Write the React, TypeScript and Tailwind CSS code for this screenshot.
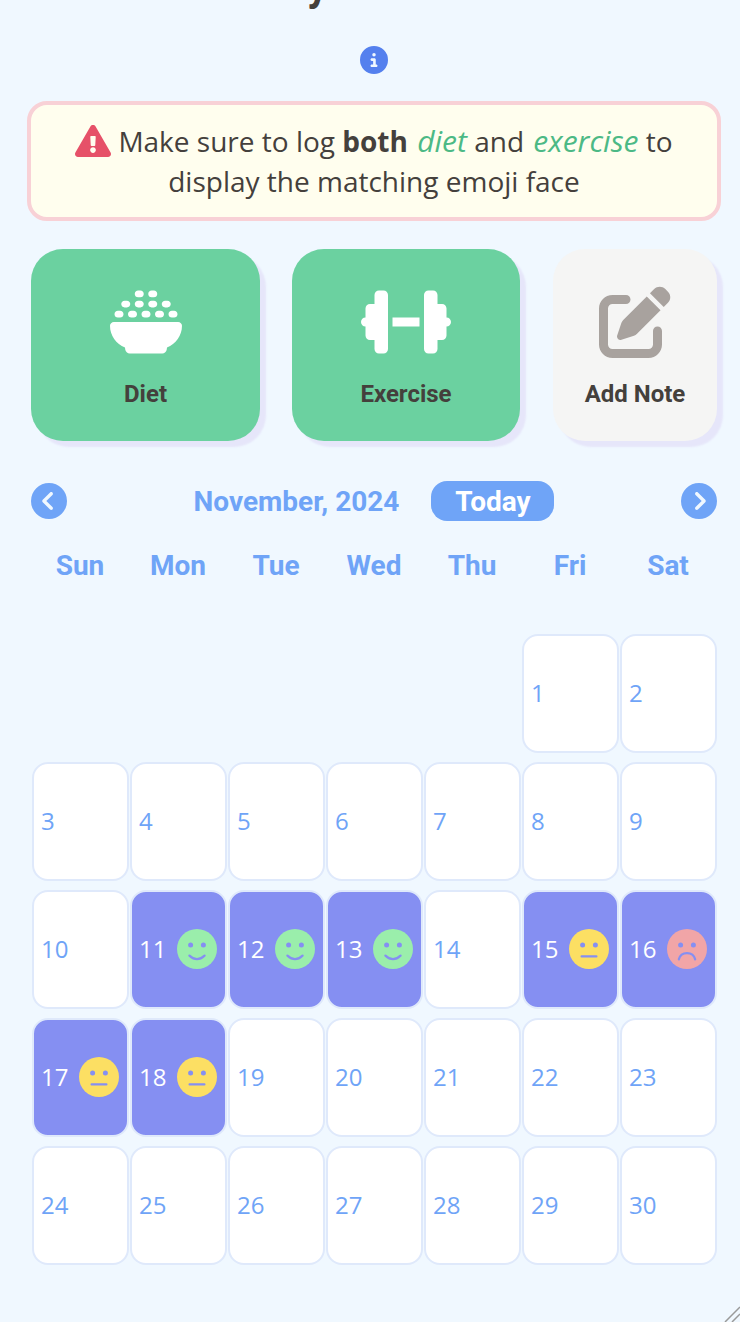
import React from "react";
import { FaExclamationTriangle } from "react-icons/fa";
import {
  FaBowlRice,
  FaCircleChevronLeft,
  FaCircleChevronRight,
  FaCircleInfo,
  FaDumbbell,
  FaPenToSquare,
} from "react-icons/fa6";

type Mood = "good" | "ok" | "bad";

const weekDays = ["Sun", "Mon", "Tue", "Wed", "Thu", "Fri", "Sat"];

const moods: Record<number, Mood> = {
  11: "good",
  12: "good",
  13: "good",
  15: "ok",
  16: "bad",
  17: "ok",
  18: "ok",
};

const days = Array.from({ length: 30 }, (_, i) => i + 1);

const moodFill: Record<Mood, string> = {
  good: "#9aeeab",
  ok: "#fcdf63",
  bad: "#f1a5a7",
};

const mouths: Record<Mood, string> = {
  good: "M12.4 26.6Q20 33.6 27.6 26.6",
  ok: "M12.6 27.4H27.4",
  bad: "M11.8 30.4C14 22 26 22 28.2 30.4",
};

// face drawn by hand, eyes and mouth take the cell colour
const MoodIcon = ({ mood }: { mood: Mood }) => (
  <svg className="h-10 w-10" viewBox="0 0 40 40">
    <circle cx="20" cy="20" r="20" fill={moodFill[mood]} />
    <circle cx="13.6" cy="16" r="2.5" fill="#858ff2" />
    <circle cx="26.4" cy="16" r="2.5" fill="#858ff2" />
    <path d={mouths[mood]} fill="none" stroke="#858ff2" strokeWidth="2.2" strokeLinecap="round" />
  </svg>
);

const DayCell = ({ day }: { day: number }) => {
  const mood = moods[day];
  return (
    <div
      className={`mx-[0.5px] mt-[0.5px] mb-[8.5px] flex h-[119px] items-center justify-between rounded-2xl border-2 border-[#dfe9fb] px-[7.5px] text-[24px] ${
        mood ? "bg-[#858ff2] text-white" : "bg-white text-[#6fa4f7]"
      }`}
    >
      <span>{day}</span>
      {mood && <MoodIcon mood={mood} />}
    </div>
  );
};

const ActionButton = ({
  label,
  icon,
  className,
}: {
  label: string;
  icon: React.ReactNode;
  className: string;
}) => (
  <div
    className={`flex h-[192px] flex-col items-center rounded-[32px] pt-[35px] shadow-[6px_6px_2px_0_#e6e6fa] ${className}`}
  >
    <div className="flex h-[76px] items-center">{icon}</div>
    <span className="mt-[19px] font-['Roboto',sans-serif] text-[24px] font-bold leading-[30px] text-[#44403c]">
      {label}
    </span>
  </div>
);

export default function App() {
  return (
    <div className="relative h-[1322px] w-[740px] overflow-hidden bg-[#f0f8ff] font-['Open_Sans',sans-serif]">
      <div className="ml-[31px] w-[686px]">
        <h1 className="mt-[-37px] h-[46px] text-center font-['Roboto',sans-serif] text-[42px] font-bold leading-[46px] text-[#44403c]">
          Daily Overview
        </h1>

        <div className="mt-[37px] flex justify-center">
          <FaCircleInfo className="text-[28px] text-[#5480ee]" />
        </div>

        <div className="mx-[-4px] mt-[27px] h-[120px] rounded-[20px] border-4 border-[#f8d1d6] bg-[#fffeee] px-2 pt-[16px] text-center text-[28px] leading-[40px] text-[#44403c]">
          <FaExclamationTriangle className="mr-[7px] inline-block align-[-7px] text-[36px] text-[#e65168]" />
          Make sure to log <b className="mr-[2px] font-bold">both</b>{" "}
          <i className="text-[30px] text-[#4cb985]">diet</i> and{" "}
          <i className="ml-[2px] text-[30px] text-[#4cb985]">exercise</i> to display the matching
          emoji face
        </div>

        <div className="mt-[28px] flex gap-8">
          <ActionButton
            label="Diet"
            className="w-[229px] bg-[#6bd1a0]"
            icon={<FaBowlRice className="text-[72px] text-white" />}
          />
          <ActionButton
            label="Exercise"
            className="w-[228px] bg-[#6bd1a0]"
            icon={<FaDumbbell className="text-[90px] text-white" />}
          />
          <ActionButton
            label="Add Note"
            className="ml-auto w-[164px] bg-[#f5f5f4]"
            icon={<FaPenToSquare className="text-[72px] text-[#a8a29e]" />}
          />
        </div>

        <div className="mt-[40px] flex h-10 items-center justify-between font-['Roboto',sans-serif] font-bold text-[#6fa4f7]">
          <FaCircleChevronLeft className="text-[36px]" />
          <div className="flex items-center gap-8">
            <span className="pt-[2px] text-[28px]">November, 2024</span>
            <span className="flex h-10 w-[123px] items-center justify-center rounded-2xl bg-[#6fa4f7] pt-[2px] text-[28px] text-white">
              Today
            </span>
          </div>
          <FaCircleChevronRight className="text-[36px]" />
        </div>

        <div className="mt-[25px] grid grid-cols-7 font-['Roboto',sans-serif] text-[28px] font-bold leading-[40px] text-[#6fa4f7]">
          {weekDays.map((d) => (
            <div key={d} className="text-center">
              {d}
            </div>
          ))}
        </div>

        <div className="mt-[47px] grid grid-cols-7">
          <div className="col-span-5" />
          {days.map((d) => (
            <DayCell key={d} day={d} />
          ))}
        </div>
      </div>

      <svg className="absolute bottom-0 right-0 h-[16px] w-[16px]" viewBox="0 0 16 16">
        <path d="M1 16 16 1M8 16l8-8" stroke="#9a9a9a" strokeWidth="1.5" />
      </svg>
    </div>
  );
}
